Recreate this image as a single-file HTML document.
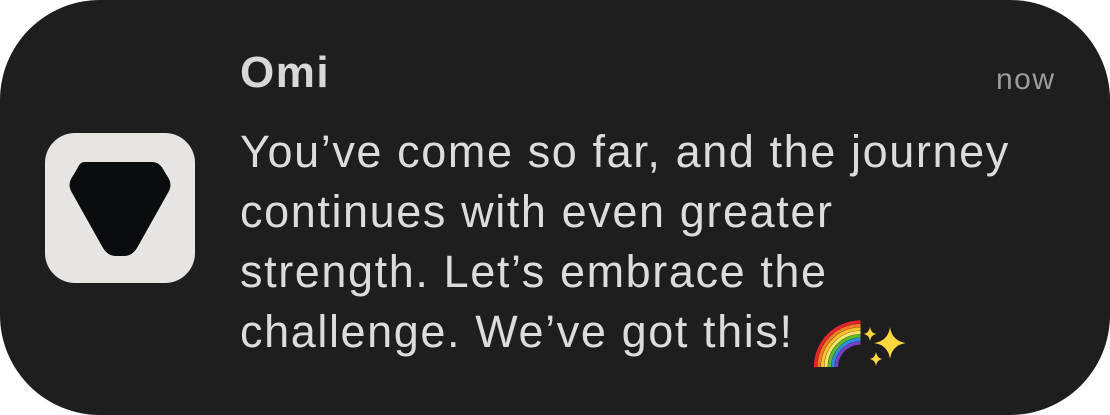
<!DOCTYPE html>
<html><head><meta charset="utf-8"><style>
html,body{margin:0;padding:0;background:#fff;width:1110px;height:415px;overflow:hidden}
.card{position:absolute;left:0;top:0;width:1110px;height:415px;background:#1e1e1e;border-radius:100px}
.icon{position:absolute;left:45px;top:133px;width:150px;height:150px;border-radius:30px;background:#e6e5e2}
.t{position:absolute;font-family:"Liberation Sans",sans-serif;white-space:nowrap;color:#dcdcdc}
.title{left:240px;top:48px;font-size:44px;font-weight:bold;color:#d8d8d8;letter-spacing:1.5px}
.now{left:996px;top:63px;font-size:30px;color:#9c9c9c;letter-spacing:1.5px}
.l{left:240px;font-size:45px;line-height:60px;letter-spacing:1.6px}
</style></head><body>
<div class="card">
<div class="icon"><svg width="150" height="150" viewBox="0 0 150 150" style="position:absolute;left:0;top:0">
<path d="M39 29 H107 Q114 29 118 36 L124 46 Q127 52 124 58 L92 115 Q87 123 79 123 H71 Q63 123 58 115 L26 58 Q23 52 26 46 L32 36 Q35 29 39 29 Z" fill="#0a0d0d"/></svg></div>
<div class="t title">Omi</div>
<div class="t now">now</div>
<div class="t l" style="top:122px">You’ve come so far, and the journey</div>
<div class="t l" style="top:182px">continues with even greater</div>
<div class="t l" style="top:242px">strength. Let’s embrace the</div>
<div class="t l" style="top:302px">challenge. We’ve got this!</div>
<svg style="position:absolute;left:812px;top:318px" width="100" height="52" viewBox="0 0 100 52">
<g fill="none" stroke-width="3.2">
<path d="M3.5 49 A45 45 0 0 1 48.5 4" stroke="#e8242c"/>
<path d="M7 49 A41.5 41.5 0 0 1 48.5 7.5" stroke="#f57c20"/>
<path d="M10.5 49 A38 38 0 0 1 48.5 11" stroke="#fcc22d"/>
<path d="M14 49 A34.5 34.5 0 0 1 48.5 14.5" stroke="#fbe36a"/>
<path d="M17.5 49 A31 31 0 0 1 48.5 18" stroke="#5dbb2f"/>
<path d="M21 49 A27.5 27.5 0 0 1 48.5 21.5" stroke="#2a8fe0"/>
<path d="M24.5 49 A24 24 0 0 1 48.5 25" stroke="#7a3fc9"/>
</g>
<g fill="#fdd640">
<path d="M78 9 Q80 23 94 25 Q80 27 78 41 Q76 27 62 25 Q76 23 78 9Z"/>
<path d="M58 9 Q59 15 64 16 Q59 17 58 23 Q57 17 52 16 Q57 15 58 9Z"/>
<path d="M64 34 Q65 40 70 41 Q65 42 64 48 Q63 42 58 41 Q63 40 64 34Z"/>
</g></svg>
</div>
</body></html>
